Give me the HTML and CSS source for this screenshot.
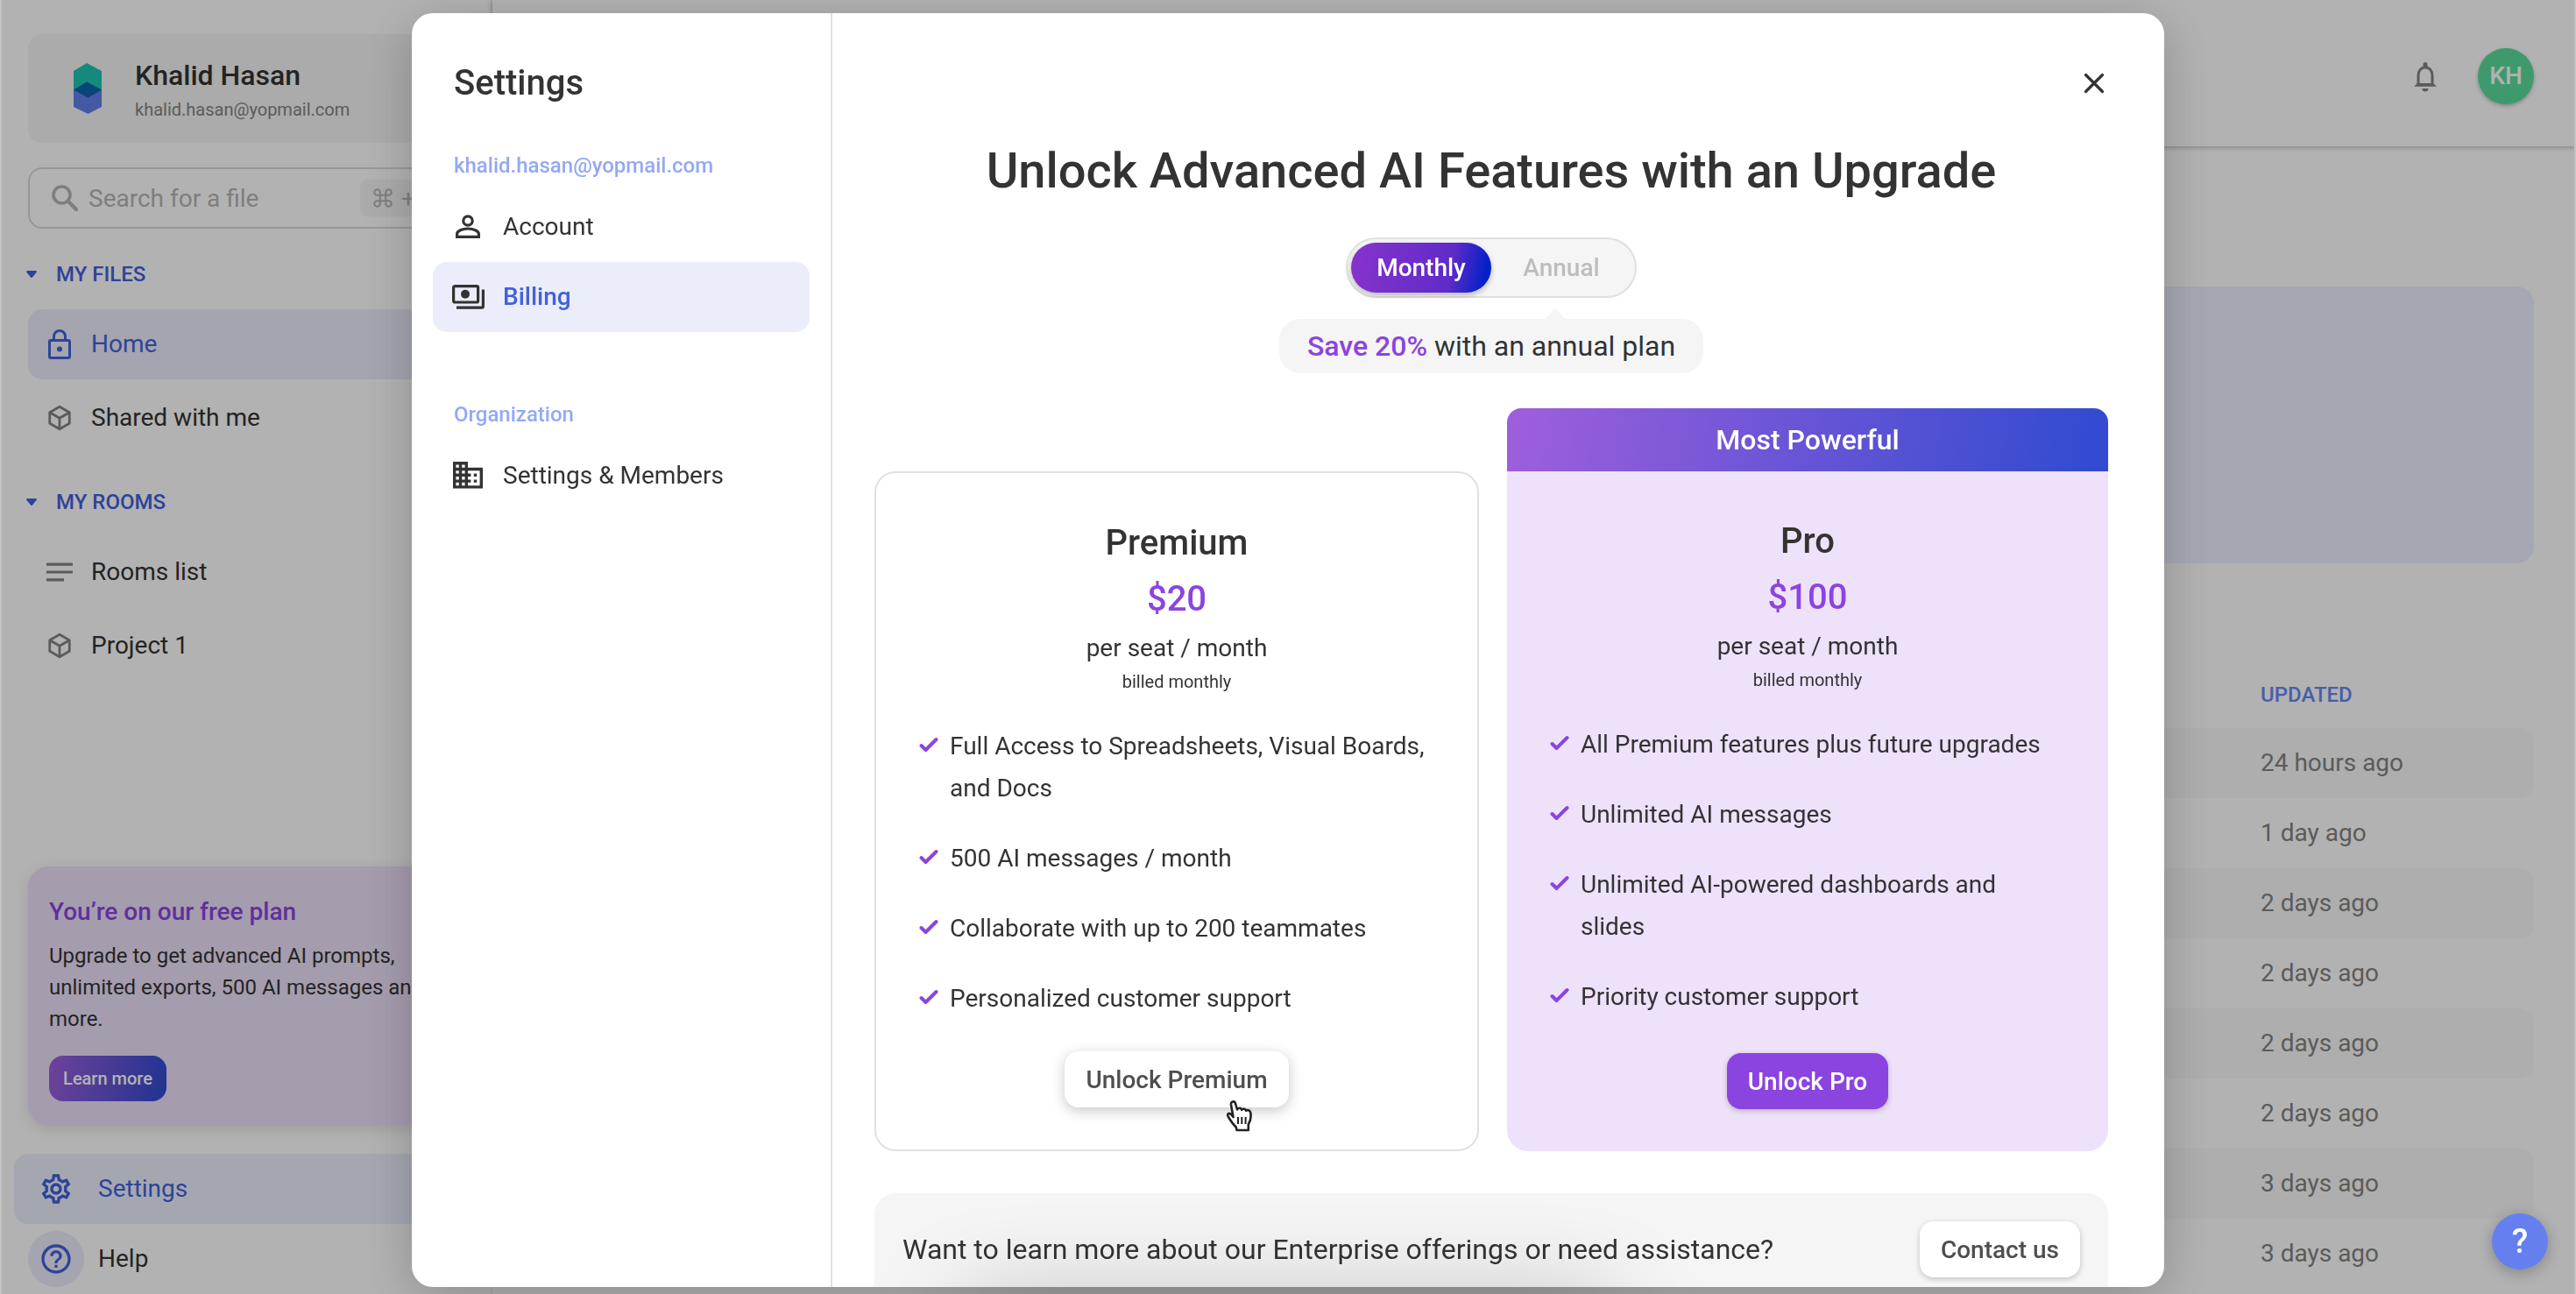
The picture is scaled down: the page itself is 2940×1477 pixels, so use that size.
FILE: index.html
```html
<!DOCTYPE html>
<html lang="en">
<head>
    <meta charset="UTF-8">
    <meta name="viewport" content="width=device-width, initial-scale=1.0">
    <title>Settings - Billing</title>
    <link rel="stylesheet" href="styles.css">
</head>
<body>
    <svg class="sprite" xmlns="http://www.w3.org/2000/svg">
        <symbol id="cube" viewBox="0 0 24 24">
            <path fill="none" stroke="currentColor" stroke-width="2.200" stroke-linejoin="round" d="M12 1.800 21 7v10l-9 5.200L3 17V7zM3 7l9 5.200L21 7M12 12.200v10"/>
        </symbol>
        <symbol id="check" viewBox="0 0 22 18">
            <path fill="none" stroke="#8b44e0" stroke-width="4" stroke-linecap="round" stroke-linejoin="round" d="M2.500 10 7.500 15 19.500 3"/>
        </symbol>
    </svg>

    <div class="app">
        <aside class="sidebar">
            <div class="workspace">
                <svg class="workspace-logo" viewBox="0 0 32 58">
                    <path fill="#20c5b4" d="M15 0 32 9v22H0V9z"/>
                    <path fill="#6080ea" d="M0 30h32v20L16.500 58 0 50z"/>
                    <path fill="#0c63ad" d="M15 21.500 32 30.500 16.500 39.500 0 30.500z"/>
                </svg>
                <div class="workspace-text">
                    <div class="workspace-name">Khalid Hasan</div>
                    <div class="workspace-email">khalid.hasan@yopmail.com</div>
                </div>
            </div>

            <div class="search">
                <svg class="search-icon" viewBox="0 0 30 30">
                    <circle cx="11.500" cy="11.500" r="9.500" fill="none" stroke="currentColor" stroke-width="3.600"/>
                    <path d="M19 19 28 28" stroke="currentColor" stroke-width="4.400" stroke-linecap="round"/>
                </svg>
                <span>Search for a file</span>
                <span class="shortcut">
                    <svg width="26" height="26" viewBox="0 0 24 24" fill="none" stroke="currentColor" stroke-width="1.900"><path d="M15 6v12a3 3 0 1 0 3-3H6a3 3 0 1 0 3 3V6a3 3 0 1 0-3 3h12a3 3 0 1 0-3-3"/></svg>
                    + K
                </span>
            </div>

            <div class="group-title"><svg class="caret" viewBox="0 0 12 8"><path d="M1 0h10q1.500 .5.5 2L7 7.500q-1 1-2 0L.5 2Q-.5.5 1 0z"/></svg>MY FILES</div>
            <nav class="nav">
                <a class="nav-item active">
                    <svg class="nav-icon lock" viewBox="0 0 26 34" fill="none" stroke="currentColor" stroke-width="3">
                        <rect x="1.500" y="12.500" width="23" height="20" rx="1.500"/>
                        <path d="M6.500 12.500V8a6.500 6.500 0 0 1 13 0v4.500"/>
                        <circle cx="13" cy="22.500" r="3" fill="currentColor" stroke="none"/>
                    </svg>
                    Home
                </a>
                <a class="nav-item"><svg class="nav-icon"><use href="#cube"/></svg>Shared with me</a>
            </nav>

            <div class="group-title rooms"><svg class="caret" viewBox="0 0 12 8"><path d="M1 0h10q1.500 .5.5 2L7 7.500q-1 1-2 0L.5 2Q-.5.5 1 0z"/></svg>MY ROOMS</div>
            <nav class="nav">
                <a class="nav-item">
                    <svg class="nav-icon" viewBox="0 0 30 30" fill="currentColor"><path d="M0 4.500h30v3.200H0zM0 13.400h30v3.200H0zM0 22.300h20v3.200H0z"/></svg>
                    Rooms list
                </a>
                <a class="nav-item"><svg class="nav-icon"><use href="#cube"/></svg>Project 1</a>
            </nav>

            <div class="sidebar-bottom">
                <div class="plan-card">
                    <div class="plan-card-title">You’re on our free plan</div>
                    <p>Upgrade to get advanced AI prompts, unlimited exports, 500 AI messages and more.</p>
                    <button class="learn-more">Learn more</button>
                </div>
                <a class="foot-item active">
                    <span class="foot-icon">
                        <svg width="40" height="40" viewBox="0 0 24 24" fill="currentColor"><path d="M19.430 12.980c.04-.32.070-.64.070-.98 0-.34-.03-.66-.07-.98l2.110-1.650c.19-.15.24-.42.120-.64l-2-3.460c-.09-.16-.26-.25-.44-.25-.06 0-.12.010-.17.030l-2.490 1c-.52-.4-1.080-.73-1.690-.98l-.38-2.650C14.460 2.180 14.250 2 14 2h-4c-.25 0-.46.180-.49.420l-.38 2.650c-.61.250-1.170.59-1.690.98l-2.490-1c-.06-.02-.12-.03-.18-.03-.17 0-.34.090-.43.250l-2 3.460c-.13.220-.07.490.120.640l2.110 1.650c-.04.320-.07.650-.07.980 0 .33.030.66.070.98l-2.110 1.650c-.19.150-.24.420-.12.640l2 3.460c.09.160.26.250.44.250.06 0 .12-.01.170-.03l2.490-1c.52.4 1.080.73 1.690.98l.38 2.650c.03.240.24.420.49.420h4c.25 0 .46-.18.490-.42l.38-2.650c.61-.25 1.170-.59 1.690-.98l2.490 1c.06.020.12.030.18.030.17 0 .34-.09.430-.25l2-3.460c.12-.22.070-.49-.12-.64l-2.110-1.650zm-1.980-1.710c.04.310.05.520.05.730 0 .21-.02.430-.05.730l-.14 1.130.89.7 1.080.84-.7 1.210-1.270-.51-1.040-.42-.9.680c-.43.320-.84.560-1.250.73l-1.060.43-.16 1.130-.2 1.350h-1.400l-.19-1.350-.16-1.130-1.060-.43c-.43-.18-.83-.41-1.230-.71l-.91-.7-1.060.43-1.270.51-.7-1.210 1.080-.84.890-.7-.14-1.130c-.03-.31-.05-.54-.05-.74s.02-.43.050-.73l.14-1.130-.89-.7-1.080-.84.7-1.210 1.270.51 1.040.42.9-.68c.43-.32.840-.56 1.250-.73l1.060-.43.160-1.130.2-1.350h1.390l.19 1.350.16 1.130 1.060.43c.43.180.83.410 1.230.71l.91.7 1.060-.43 1.270-.51.7 1.210-1.070.85-.89.7.14 1.130zM12 8c-2.210 0-4 1.790-4 4s1.790 4 4 4 4-1.790 4-4-1.790-4-4-4zm0 6c-1.100 0-2-.9-2-2s.9-2 2-2 2 .9 2 2-.9 2-2 2z"/></svg>
                    </span>
                    Settings
                </a>
                <a class="foot-item">
                    <span class="foot-icon help">
                        <svg width="40" height="40" viewBox="0 0 24 24" fill="currentColor"><path d="M11 18h2v-2h-2v2zm1-16C6.480 2 2 6.480 2 12s4.480 10 10 10 10-4.480 10-10S17.520 2 12 2zm0 18c-4.410 0-8-3.590-8-8s3.590-8 8-8 8 3.590 8 8-3.590 8-8 8zm0-14c-2.210 0-4 1.790-4 4h2c0-1.100.9-2 2-2s2 .9 2 2c0 2-3 1.750-3 5h2c0-2.250 3-2.500 3-5 0-2.210-1.790-4-4-4z"/></svg>
                    </span>
                    Help
                </a>
            </div>
        </aside>

        <main class="main">
            <header class="topbar">
                <svg class="bell" viewBox="0 0 26 34">
                    <path fill="none" stroke="currentColor" stroke-width="3" d="M5 27V15c0-5 3-9 8-9s8 4 8 9v12"/>
                    <path fill="currentColor" d="M0 27.800 4 24h18l4 3.800zM10.500 5V2.500a2.500 2.500 0 0 1 5 0V5zM9.500 30h7a3.500 3.500 0 0 1-7 0z"/>
                </svg>
                <div class="avatar">KH</div>
            </header>
            <div class="content">
                <div class="banner"></div>
                <div class="table">
                    <div class="table-head">UPDATED</div>
                    <div class="row">24 hours ago</div>
                    <div class="row">1 day ago</div>
                    <div class="row">2 days ago</div>
                    <div class="row">2 days ago</div>
                    <div class="row">2 days ago</div>
                    <div class="row">2 days ago</div>
                    <div class="row">3 days ago</div>
                    <div class="row">3 days ago</div>
                </div>
            </div>
        </main>
    </div>

    <div class="overlay">
        <div class="modal">
            <aside class="modal-side">
                <h2>Settings</h2>
                <div class="side-label">khalid.hasan@yopmail.com</div>
                <a class="side-item">
                    <svg viewBox="0 0 28 27" width="28" height="27" fill="none" stroke="currentColor" stroke-width="3.200"><circle cx="14" cy="7" r="5.200"/><path d="M1.600 25.400V22c0-3.500 6-6 12.400-6s12.400 2.500 12.400 6v3.400z"/></svg>
                    Account
                </a>
                <a class="side-item active">
                    <svg viewBox="0 0 37 28" width="37" height="28" fill="none" stroke="#333" stroke-width="3.200"><rect x="1.600" y="1.600" width="28" height="18.400" rx="1.500"/><circle cx="15" cy="10.800" r="5" fill="#333" stroke="none"/><path d="M35.400 5.500v19a1.600 1.600 0 0 1-1.600 1.600H5"/></svg>
                    <span>Billing</span>
                </a>
                <div class="side-label org">Organization</div>
                <a class="side-item">
                    <svg viewBox="2 3 20 18" width="34" height="30.600" fill="currentColor"><path d="M12 7V3H2v18h20V7H12zM6 19H4v-2h2v2zm0-4H4v-2h2v2zm0-4H4V9h2v2zm0-4H4V5h2v2zm4 12H8v-2h2v2zm0-4H8v-2h2v2zm0-4H8V9h2v2zm0-4H8V5h2v2zm10 12h-8v-2h2v-2h-2v-2h2v-2h-2V9h8v10zm-2-8h-2v2h2v-2zm0 4h-2v2h2v-2z"/></svg>
                    Settings &amp; Members
                </a>
            </aside>

            <section class="billing">
                <button class="close" aria-label="Close">
                    <svg width="24" height="24" viewBox="0 0 24 24" stroke="#333" stroke-width="3.200" stroke-linecap="round"><path d="M2.500 2.500l19 19M21.500 2.500l-19 19"/></svg>
                </button>
                <h1>Unlock Advanced AI Features with an Upgrade</h1>
                <div class="toggle">
                    <span class="toggle-option selected">Monthly</span>
                    <span class="toggle-option">Annual</span>
                </div>
                <div class="save-note">
                    <svg class="save-arrow" viewBox="0 0 24 12"><path fill="#f5f5f5" d="M0 12 10 1q2-2 4 0l10 11z"/></svg>
                    <b>Save 20%</b> with an annual plan
                </div>

                <div class="plans">
                    <div class="plan">
                        <div class="plan-body premium">
                            <div class="plan-name">Premium</div>
                            <div class="plan-price">$20</div>
                            <div class="plan-unit">per seat / month</div>
                            <div class="plan-billed">billed monthly</div>
                            <ul>
                                <li><svg><use href="#check"/></svg>Full Access to Spreadsheets, Visual Boards, and Docs</li>
                                <li><svg><use href="#check"/></svg>500 AI messages / month</li>
                                <li><svg><use href="#check"/></svg>Collaborate with up to 200 teammates</li>
                                <li><svg><use href="#check"/></svg>Personalized customer support</li>
                            </ul>
                            <button class="button hovered">
                                Unlock Premium
                                <svg class="cursor" viewBox="0 0 32 38">
                                    <path fill="#fff" stroke="#222" stroke-width="2.600" stroke-linejoin="round" d="M8.500 20 6 6C5.500 2 10 1 11 4.500l2 7c1-2.500 4.500-2.300 5.200.3 1.300-1.800 4.300-1.200 4.800 1 1.500-1.300 4.500-.8 5.200 2 1 5.200.3 9.200-2.400 13.700V35H12.500l-.8-3.500C8.500 28.500 6 25 3 20c-2-3.500.5-5.500 3-3z"/>
                                    <path fill="none" stroke="#222" stroke-width="2" d="M14 20v8M18.300 20v8M22.600 20v8"/>
                                </svg>
                            </button>
                        </div>
                    </div>
                    <div class="plan">
                        <div class="plan-banner">Most Powerful</div>
                        <div class="plan-body pro">
                            <div class="plan-name">Pro</div>
                            <div class="plan-price">$100</div>
                            <div class="plan-unit">per seat / month</div>
                            <div class="plan-billed">billed monthly</div>
                            <ul>
                                <li><svg><use href="#check"/></svg>All Premium features plus future upgrades</li>
                                <li><svg><use href="#check"/></svg>Unlimited AI messages</li>
                                <li><svg><use href="#check"/></svg>Unlimited AI-powered dashboards and slides</li>
                                <li><svg><use href="#check"/></svg>Priority customer support</li>
                            </ul>
                            <button class="button purple">Unlock Pro</button>
                        </div>
                    </div>
                </div>

                <div class="enterprise">
                    <span>Want to learn more about our Enterprise offerings or need assistance?</span>
                    <button class="button">Contact us</button>
                </div>
            </section>
        </div>
    </div>

    <div class="bottom-shade"></div>
    <div class="chat-button">?</div>
</body>
</html>
```
FILE: styles.css
```css
:root {
    --text: #333;
    --blue: #4361db;
    --purple: #8b44e0;
    --gray: #f5f5f5;
    --border: #e0e0e0;
    --gradient: linear-gradient(100deg, #9f5fdc 0%, #324bd0 97%);
}

* {
    box-sizing: border-box;
}

body {
    margin: 0;
    height: 100vh;
    overflow: hidden;
    font-family: Roboto, "Liberation Sans", sans-serif;
    font-size: 28px;
    color: var(--text);
    background: #fff;
}

h1, h2, p, ul {
    margin: 0;
    padding: 0;
    font-weight: 500;
}

button {
    font-family: inherit;
    border: none;
    padding: 0;
}

svg {
    display: block;
    flex-shrink: 0;
}

.sprite {
    display: none;
}

.app {
    display: flex;
    height: 100vh;
    overflow: hidden;
}

/* Sidebar */

.sidebar {
    width: 562px;
    height: 100vh;
    padding: 39px 32px 8px;
    border-right: 2px solid #f4f4f4;
    display: flex;
    flex-direction: column;
}

.workspace {
    height: 124px;
    padding-left: 52px;
    background: var(--gray);
    border-radius: 16px;
    display: flex;
    align-items: center;
    gap: 38px;
}

.workspace-logo {
    width: 32px;
    height: 58px;
}

.workspace-text {
    padding-top: 6px;
}

.workspace-name {
    font-size: 32px;
    font-weight: 500;
    line-height: 42px;
}

.workspace-email {
    font-size: 20px;
    line-height: 36px;
    color: #838383;
}

.search {
    height: 70px;
    margin-top: 28px;
    padding: 0 12px 0 25px;
    border: 2px solid #d9d9d9;
    border-radius: 16px;
    display: flex;
    align-items: center;
    gap: 12px;
    color: #b5b5b5;
}

.search-icon {
    width: 30px;
    height: 30px;
}

.shortcut {
    margin-left: auto;
    width: 103px;
    height: 42px;
    padding-left: 13px;
    background: var(--gray);
    border-radius: 8px;
    display: flex;
    align-items: center;
    gap: 8px;
}

.group-title {
    margin: 36px 0 24px -2px;
    display: flex;
    align-items: center;
    gap: 22px;
    font-size: 24px;
    line-height: 32px;
    font-weight: 500;
    color: var(--blue);
}

.group-title.rooms {
    margin-top: 40px;
}

.caret {
    width: 12px;
    height: 8px;
    fill: var(--blue);
}

.nav {
    display: flex;
    flex-direction: column;
    gap: 4px;
}

.nav-item {
    height: 80px;
    padding: 0 0 1px 21px;
    border-radius: 16px;
    display: flex;
    align-items: center;
    gap: 21px;
}

.nav-icon {
    width: 30px;
    height: 30px;
    color: #838383;
}

.nav-icon.lock {
    height: 34px;
    color: var(--blue);
}

.nav-item.active,
.foot-item.active {
    background: #ececfb;
    color: var(--blue);
}

.sidebar-bottom {
    margin-top: auto;
}

.plan-card {
    height: 296px;
    margin-bottom: 32px;
    padding: 32px 24px 28px;
    border-radius: 24px;
    background: #ede0fa;
    box-shadow: 0 4px 16px rgba(0, 0, 0, 0.12);
}

.plan-card-title {
    font-weight: 500;
    line-height: 40px;
    color: var(--purple);
}

.plan-card p {
    margin: 12px 0 24px;
    font-size: 24px;
    font-weight: 400;
    line-height: 36px;
}

.learn-more {
    width: 134px;
    height: 52px;
    border-radius: 16px;
    background: var(--gradient);
    color: #fff;
    font-size: 20px;
    font-weight: 500;
}

.foot-item {
    height: 80px;
    margin-left: -16px;
    padding: 0 0 1px 16px;
    border-radius: 16px;
    display: flex;
    align-items: center;
    gap: 16px;
}

.foot-item.active {
    background: #ecf0fd;
}

.foot-item:last-child {
    height: 64px;
    margin-top: 8px;
}

.foot-icon {
    width: 64px;
    height: 64px;
    border-radius: 50%;
    display: grid;
    place-items: center;
    color: var(--blue);
}

.foot-icon.help {
    background: #ececfb;
}

/* Page behind the dialog */

.main {
    flex: 1;
}

.topbar {
    height: 167px;
    padding: 55px 48px 0 0;
    box-shadow: 0 1px 6px rgba(0, 0, 0, 0.3);
    display: flex;
    justify-content: flex-end;
    gap: 46px;
}

.bell {
    width: 28px;
    height: 34px;
    margin-top: 16px;
    color: #838383;
}

.avatar {
    width: 64px;
    height: 64px;
    border-radius: 50%;
    background: #59dd9c;
    box-shadow: 0 2px 4px rgba(0, 0, 0, 0.25);
    color: #fff;
    font-weight: 500;
    line-height: 63px;
    text-align: center;
}

.content {
    padding: 160px 48px 0;
}

.banner {
    height: 316px;
    border-radius: 20px;
    background: #edf1ff;
}

.table {
    padding-top: 134px;
}

.table-head {
    padding-left: 1970px;
    font-size: 24px;
    font-weight: 500;
    line-height: 32px;
    color: #6587f5;
    margin-bottom: 22px;
}

.row {
    height: 80px;
    padding-left: 1970px;
    border-radius: 16px;
    line-height: 80px;
    color: #838383;
}

.row:nth-child(even) {
    background: #f9f9f9;
}

/* Dialog */

.overlay {
    position: fixed;
    inset: 0;
    padding: 15px 0 8px;
    background: rgba(0, 0, 0, 0.3);
    border: solid #c3c3c3;
    border-width: 0 2px;
    display: flex;
    justify-content: center;
}

.modal {
    width: 2000px;
    height: 1454px;
    border-radius: 24px;
    overflow: hidden;
    background: #fff;
    box-shadow: 0 12px 60px rgba(0, 0, 0, 0.22);
    display: flex;
}

.modal-side {
    width: 480px;
    padding: 56px 24px 0;
    border-right: 2px solid var(--border);
}

.modal-side h2 {
    padding-left: 24px;
    font-size: 40px;
    line-height: 48px;
}

.side-label {
    margin: 54px 0 14px;
    padding-left: 24px;
    font-size: 24px;
    font-weight: 500;
    line-height: 32px;
    color: #93a8f6;
}

.side-label.org {
    margin-top: 78px;
}

.side-item {
    height: 80px;
    padding-bottom: 1px;
    border-radius: 16px;
    display: grid;
    grid-template-columns: 80px 1fr;
    align-items: center;
}

.side-item svg {
    justify-self: center;
}

.side-item.active {
    background: #ebedfa;
    color: var(--blue);
    font-weight: 500;
}

.billing {
    flex: 1;
    height: 100%;
    overflow: hidden;
    padding: 56px 64px 0 48px;
    display: flex;
    flex-direction: column;
    align-items: center;
}

.billing > * {
    flex-shrink: 0;
}

.close {
    width: 48px;
    height: 48px;
    margin-right: -8px;
    align-self: flex-end;
    background: none;
    display: grid;
    place-items: center;
}

h1 {
    margin: 42px 0;
    font-size: 56px;
    line-height: 68px;
}

.toggle {
    height: 69px;
    padding: 4px;
    border: 2px solid var(--border);
    border-radius: 35px;
    background: var(--gray);
    display: flex;
    color: #bdbdbd;
    font-weight: 500;
    line-height: 57px;
    text-align: center;
}

.toggle-option {
    width: 160px;
    border-radius: 29px;
}

.toggle-option.selected {
    color: #fff;
    background: linear-gradient(100deg, #8833cc 0%, #5f2bc8 70%, #0020c8 95%);
    box-shadow: 0 3px 6px rgba(0, 0, 0, 0.25);
}

.save-note {
    position: relative;
    height: 62px;
    margin: 24px 0 40px;
    padding: 0 32px;
    border-radius: 24px;
    background: var(--gray);
    font-size: 32px;
    line-height: 62px;
}

.save-note b {
    font-weight: 500;
    color: var(--purple);
}

.save-arrow {
    position: absolute;
    top: -12px;
    left: 303px;
    width: 24px;
    height: 13px;
}

.plans {
    width: 100%;
    display: grid;
    grid-template-columns: 690px 686px;
    justify-content: space-between;
    align-items: end;
}

.plan-banner {
    height: 72px;
    border-radius: 16px 16px 0 0;
    background: var(--gradient);
    color: #fff;
    font-size: 32px;
    font-weight: 500;
    line-height: 72px;
    text-align: center;
}

.plan-body {
    height: 776px;
    padding: 48px 48px 0;
    display: flex;
    flex-direction: column;
    align-items: center;
}

.plan-body.premium {
    border: 2px solid var(--border);
    border-radius: 24px;
}

.plan-body.pro {
    border-radius: 0 0 24px 24px;
    background: #eee1fa;
}

.plan-name,
.plan-price {
    font-size: 40px;
    font-weight: 500;
    line-height: 64px;
}

.plan-price {
    color: var(--purple);
}

.plan-unit {
    line-height: 48px;
}

.plan-billed {
    font-size: 20px;
    line-height: 29px;
}

.plan-body ul {
    align-self: stretch;
    margin: 35px 0 36px;
    list-style: none;
    font-weight: 400;
    line-height: 48px;
    display: flex;
    flex-direction: column;
    gap: 32px;
}

.plan-body.pro ul {
    margin-bottom: 40px;
    padding-right: 12px;
}

.plan-body li {
    display: flex;
    gap: 13px;
}

.plan-body li svg {
    width: 22px;
    height: 18px;
    margin: 13px 0 0 1px;
}

.button {
    position: relative;
    height: 64px;
    padding: 0 24px;
    border-radius: 16px;
    background: #fff;
    box-shadow: 0 2px 6px rgba(0, 0, 0, 0.22);
    color: #4f4f4f;
    font-size: 28px;
    font-weight: 500;
    white-space: nowrap;
}

.button.hovered {
    box-shadow: 0 4px 16px rgba(0, 0, 0, 0.22);
}

.button.purple {
    background: var(--purple);
    color: #fff;
}

.cursor {
    position: absolute;
    left: 184px;
    top: 55px;
    width: 32px;
    height: 38px;
}

.enterprise {
    width: 100%;
    height: 128px;
    margin-top: 48px;
    padding: 0 32px;
    border-radius: 24px;
    background: var(--gray);
    display: flex;
    align-items: center;
    justify-content: space-between;
    font-size: 32px;
}

/* Floating elements */

.bottom-shade {
    position: fixed;
    left: 1120px;
    right: 1120px;
    bottom: -60px;
    height: 30px;
    box-shadow: 0 0 110px 20px rgba(0, 0, 0, 0.26);
}

.chat-button {
    position: fixed;
    right: 32px;
    bottom: 28px;
    width: 64px;
    height: 64px;
    border-radius: 50%;
    background: #6580ee;
    box-shadow: 0 4px 16px rgba(0, 0, 0, 0.25);
    color: #fff;
    font-size: 38px;
    font-weight: 500;
    line-height: 64px;
    text-align: center;
}
```
